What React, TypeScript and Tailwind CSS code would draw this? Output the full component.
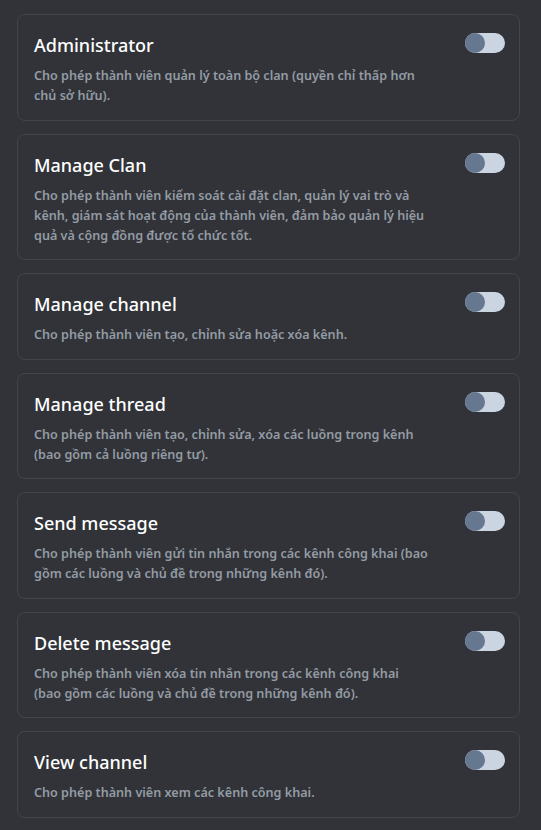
const permissions = [
  {
    title: 'Administrator',
    lines: ['Cho phép thành viên quản lý toàn bộ clan (quyền chỉ thấp hơn', 'chủ sở hữu).'],
  },
  {
    title: 'Manage Clan',
    lines: [
      'Cho phép thành viên kiểm soát cài đặt clan, quản lý vai trò và',
      'kênh, giám sát hoạt động của thành viên, đảm bảo quản lý hiệu',
      'quả và cộng đồng được tổ chức tốt.',
    ],
  },
  {
    title: 'Manage channel',
    lines: ['Cho phép thành viên tạo, chỉnh sửa hoặc xóa kênh.'],
  },
  {
    title: 'Manage thread',
    lines: ['Cho phép thành viên tạo, chỉnh sửa, xóa các luồng trong kênh', '(bao gồm cả luồng riêng tư).'],
  },
  {
    title: 'Send message',
    lines: [
      'Cho phép thành viên gửi tin nhắn trong các kênh công khai (bao',
      'gồm các luồng và chủ đề trong những kênh đó).',
    ],
  },
  {
    title: 'Delete message',
    lines: [
      'Cho phép thành viên xóa tin nhắn trong các kênh công khai',
      '(bao gồm các luồng và chủ đề trong những kênh đó).',
    ],
  },
  {
    title: 'View channel',
    lines: ['Cho phép thành viên xem các kênh công khai.'],
  },
];

function Toggle() {
  return (
    <div className="w-10 h-5 rounded-full bg-[#cbd5e1] flex items-center shrink-0">
      <div className="w-5 h-5 rounded-full bg-[#667790]" />
    </div>
  );
}

export default function App() {
  return (
    <div
      className="min-h-[830px] bg-[#313338] pl-[17px] pr-[21px] pt-[14px] pb-3 flex flex-col gap-[13px]"
      style={{ fontFamily: '"Noto Sans", "Open Sans", sans-serif' }}
    >
      {permissions.map((p) => (
        <div
          key={p.title}
          className="rounded-lg border border-[#43454b] bg-[#313338] pl-4 pr-[14px] pt-[18px] pb-[13.5px] flex justify-between gap-4"
        >
          <div className="max-w-[430px]">
            <p className="text-[18px] leading-6 font-medium text-white">{p.title}</p>
            <p className="mt-[9px] text-[12.6px] leading-5 font-semibold text-[#949ba4]">
              {p.lines.map((line, i) => (
                <span key={i} className="block whitespace-nowrap">
                  {line}
                </span>
              ))}
            </p>
          </div>
          <Toggle />
        </div>
      ))}
    </div>
  );
}
